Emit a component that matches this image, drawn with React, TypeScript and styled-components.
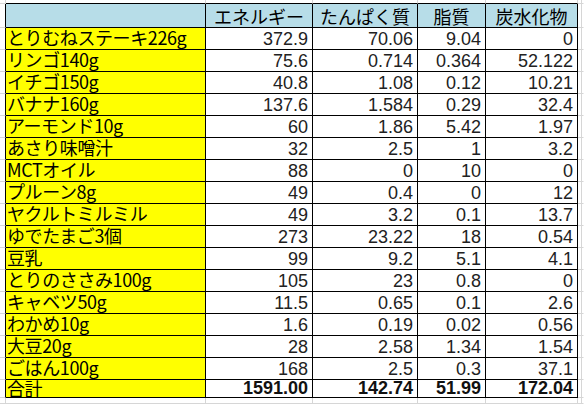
import React from 'react';
import styled, { createGlobalStyle } from 'styled-components';

// 1日の食事の栄養素まとめ表
interface FoodRow {
  name: string;
  values: string[];
}

const headers = ['エネルギー', 'たんぱく質', '脂質', '炭水化物'];

const foods: FoodRow[] = [
  { name: 'とりむねステーキ226g', values: ['372.9', '70.06', '9.04', '0'] },
  { name: 'リンゴ140g', values: ['75.6', '0.714', '0.364', '52.122'] },
  { name: 'イチゴ150g', values: ['40.8', '1.08', '0.12', '10.21'] },
  { name: 'バナナ160g', values: ['137.6', '1.584', '0.29', '32.4'] },
  { name: 'アーモンド10g', values: ['60', '1.86', '5.42', '1.97'] },
  { name: 'あさり味噌汁', values: ['32', '2.5', '1', '3.2'] },
  { name: 'MCTオイル', values: ['88', '0', '10', '0'] },
  { name: 'プルーン8g', values: ['49', '0.4', '0', '12'] },
  { name: 'ヤクルトミルミル', values: ['49', '3.2', '0.1', '13.7'] },
  { name: 'ゆでたまご3個', values: ['273', '23.22', '18', '0.54'] },
  { name: '豆乳', values: ['99', '9.2', '5.1', '4.1'] },
  { name: 'とりのささみ100g', values: ['105', '23', '0.8', '0'] },
  { name: 'キャベツ50g', values: ['11.5', '0.65', '0.1', '2.6'] },
  { name: 'わかめ10g', values: ['1.6', '0.19', '0.02', '0.56'] },
  { name: '大豆20g', values: ['28', '2.58', '1.34', '1.54'] },
  { name: 'ごはん100g', values: ['168', '2.5', '0.3', '37.1'] },
];

const total: FoodRow = { name: '合計', values: ['1591.00', '142.74', '51.99', '172.04'] };

const colWidths = [6, 200, 107, 105, 68, 92, 4, 2];

const App: React.FC = () => {
  return (
    <>
      <GlobalStyle />
      <Sheet>
        <colgroup>
          {colWidths.map((w, i) => (
            <col key={i} style={{ width: w }} />
          ))}
        </colgroup>
        <tbody>
          <Row $h={4}>
            <Gutter $right="grid" $bottom="grid" />
            {headers.concat(['']).map((_, i) => (
              <Gutter key={i} $right="grid" $bottom="black" />
            ))}
            <Gutter $right="grid" $bottom="grid" />
            <Gutter $bottom="grid" />
          </Row>
          <Row $h={24}>
            <Gutter $right="black" $bottom="grid" />
            <HeaderCell />
            {headers.map((h) => (
              <HeaderCell key={h}>{h}</HeaderCell>
            ))}
            <Gutter $right="grid" $bottom="grid" />
            <Gutter $bottom="grid" />
          </Row>
          {foods.map((f) => (
            <Row key={f.name} $h={22}>
              <Gutter $right="black" $bottom="grid" />
              <LabelCell>{f.name}</LabelCell>
              {f.values.map((v, i) => (
                <NumCell key={i}>{v}</NumCell>
              ))}
              <Gutter $right="grid" $bottom="grid" />
              <Gutter $bottom="grid" />
            </Row>
          ))}
          <Row $h={18}>
            <Gutter $right="black" $bottom="grid" />
            <LabelCell $short>{total.name}</LabelCell>
            {total.values.map((v, i) => (
              <NumCell key={i} $bold>
                {v}
              </NumCell>
            ))}
            <Gutter $right="grid" $bottom="grid" />
            <Gutter $bottom="grid" />
          </Row>
          <Row $h={6}>
            <Gutter $right="grid" $bottom="grid" />
            {headers.concat(['']).map((_, i) => (
              <Gutter key={i} $right="grid" $bottom="grid" />
            ))}
            <Gutter $right="grid" $bottom="grid" />
            <Gutter $bottom="grid" />
          </Row>
        </tbody>
      </Sheet>
    </>
  );
};

export default App;

// Styled-components
const GlobalStyle = createGlobalStyle`
  html, body {
    margin: 0;
    padding: 0;
    background: #fff;
    overflow: hidden;
  }
`;

const lineColor = { black: '#000', grid: '#d6d6d6', none: 'transparent' };
type Line = keyof typeof lineColor;

const Sheet = styled.table`
  width: 584px;
  table-layout: fixed;
  border-collapse: separate;
  border-spacing: 0;
  font-family: 'Noto Sans CJK JP', 'Liberation Sans', sans-serif;
  font-size: 18px;
  color: #000;
`;

const Row = styled.tr<{ $h: number }>`
  height: ${({ $h }) => $h}px;
`;

const BaseCell = styled.td`
  box-sizing: border-box;
  padding: 0;
  border-right: 1px solid #000;
  border-bottom: 1px solid #000;
  white-space: nowrap;
  line-height: 17px;
  vertical-align: top;
`;

const Gutter = styled(BaseCell)<{ $right?: Line; $bottom?: Line }>`
  border-right-color: ${({ $right = 'none' }) => lineColor[$right]};
  border-bottom-color: ${({ $bottom = 'none' }) => lineColor[$bottom]};
  line-height: 0;
  font-size: 0;
  overflow: hidden;
`;

const HeaderCell = styled(BaseCell)`
  background: #b7dde8;
  text-align: center;
  padding-top: 4px;
`;

const LabelCell = styled(BaseCell)<{ $short?: boolean }>`
  background: #ffff00;
  padding-left: 1px;
  line-height: ${({ $short }) => ($short ? 17 : 18)}px;
  letter-spacing: -0.4px;
`;

const NumCell = styled(BaseCell)<{ $bold?: boolean }>`
  text-align: right;
  padding-right: 4px;
  padding-top: ${({ $bold }) => ($bold ? 0 : 3)}px;
  font-family: 'Liberation Sans', Arial, sans-serif;
  font-weight: ${({ $bold }) => ($bold ? 700 : 400)};
  color: ${({ $bold }) => ($bold ? '#111' : '#222')};
`;
